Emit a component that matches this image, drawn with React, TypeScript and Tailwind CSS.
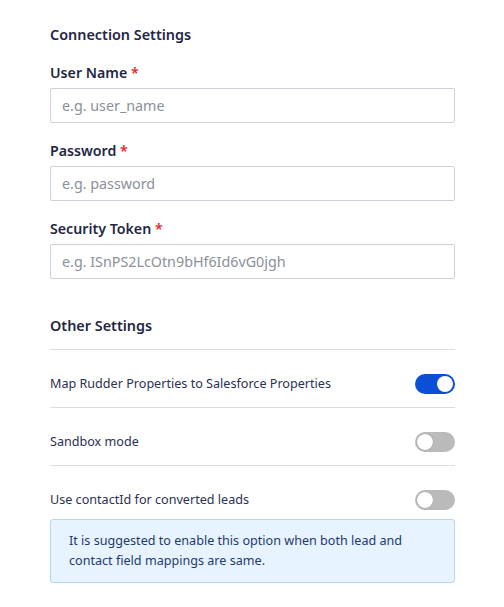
import { useState } from "react"

const fields = [
  { label: "User Name", placeholder: "e.g. user_name" },
  { label: "Password", placeholder: "e.g. password" },
  { label: "Security Token", placeholder: "e.g. ISnPS2LcOtn9bHf6Id6vG0jgh" },
]

function Toggle({ on, onChange }: { on: boolean; onChange: () => void }) {
  return (
    <button
      onClick={onChange}
      className={`flex h-5 w-10 shrink-0 items-center rounded-full p-[2px] ${on ? "justify-end bg-[#0b4fd9]" : "justify-start bg-[#bababa]"}`}
    >
      <span className="h-4 w-4 rounded-full bg-white shadow-[0_0_1px_rgba(0,0,0,0.4)]" />
    </button>
  )
}

export default function App() {
  const [mapProps, setMapProps] = useState(true)
  const [sandbox, setSandbox] = useState(false)
  const [contactId, setContactId] = useState(false)

  const rows = [
    { label: "Map Rudder Properties to Salesforce Properties", on: mapProps, set: () => setMapProps(!mapProps) },
    { label: "Sandbox mode", on: sandbox, set: () => setSandbox(!sandbox) },
  ]

  return (
    <div className="min-h-screen bg-white pl-[50px] pr-[49px] pt-[25px] font-['Noto_Sans',sans-serif] text-[#1f2744]">
      <h2 className="text-[14.4px] font-semibold leading-5">Connection Settings</h2>

      <div className="mt-[18px] flex flex-col gap-[18px]">
        {fields.map((f) => (
          <div key={f.label} className="flex flex-col gap-[5px]">
            <label className="text-[14.2px] font-semibold leading-5">
              {f.label} <span className="text-[#e5262b]">*</span>
            </label>
            <input
              placeholder={f.placeholder}
              className="h-[35px] rounded-[2px] border border-[#cdd2d9] px-[11px] text-[14.3px] outline-none placeholder:text-[#8b9099]"
            />
          </div>
        ))}
      </div>

      <h2 className="mt-[37px] text-[14.4px] font-semibold leading-5">Other Settings</h2>

      <div className="mt-[13px] border-t border-[#dcdcdc]">
        {rows.map((r) => (
          <div key={r.label} className="flex items-center justify-between border-b border-[#dcdcdc] pb-[13px] pt-6">
            <span className="text-[12.6px] leading-5 text-[#2b3150]">{r.label}</span>
            <Toggle on={r.on} onChange={r.set} />
          </div>
        ))}
        <div className="flex items-center justify-between pt-6">
          <span className="text-[12.6px] leading-5 text-[#2b3150]">Use contactId for converted leads</span>
          <Toggle on={contactId} onChange={() => setContactId(!contactId)} />
        </div>
        <div className="mt-[9px] rounded-[3px] border border-[#b3d6fb] bg-[#e7f3fe] px-[18px] py-[11px] text-[12.6px] leading-5 text-[#1e3a6e]">
          It is suggested to enable this option when both lead and contact field mappings are same.
        </div>
      </div>
    </div>
  )
}
